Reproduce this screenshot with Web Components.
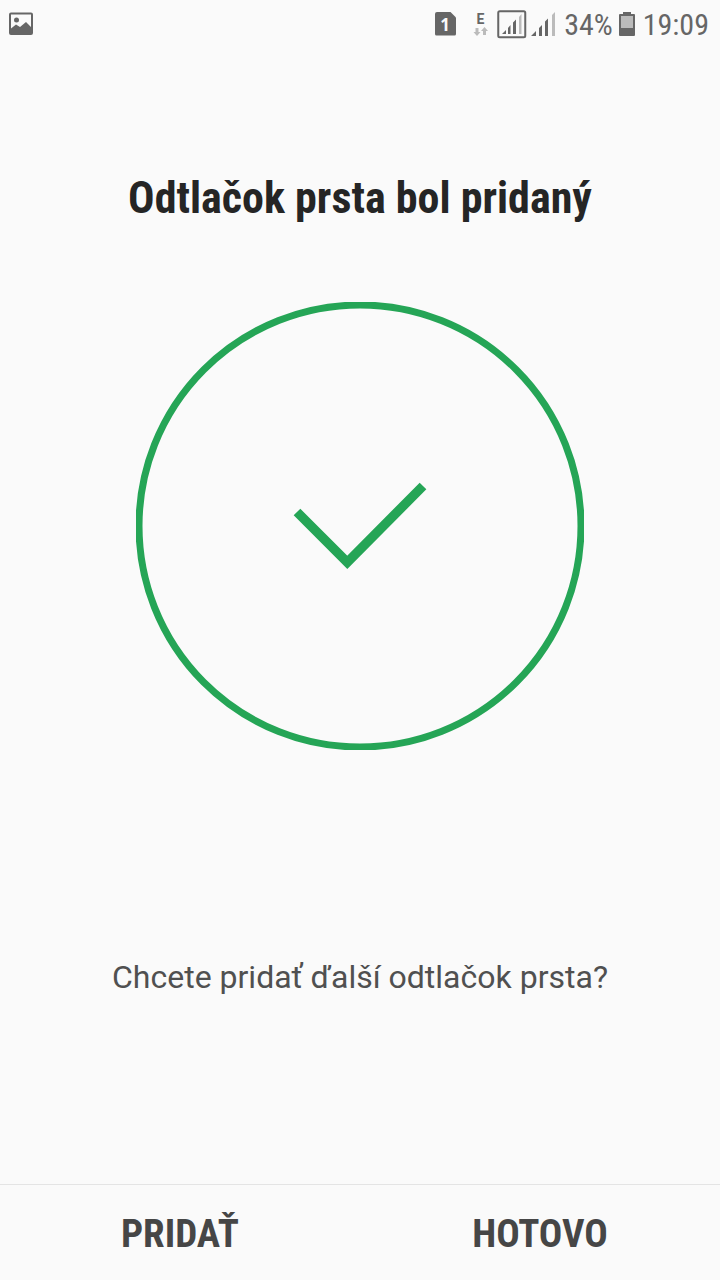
<!DOCTYPE html>
<html lang="sk">
<head>
<meta charset="utf-8">
<meta name="viewport" content="width=device-width, initial-scale=1">
<title>Odtlačok prsta</title>
<style>
  html, body { margin: 0; background: #fafafa; }
  body { font-family: Roboto, sans-serif; }
</style>
</head>
<body>
<fingerprint-screen>
  <status-bar slot="status" battery="34%" time="19:09"></status-bar>
  <span slot="title">Odtlačok prsta bol pridaný</span>
  <success-mark></success-mark>
  <span slot="question">Chcete pridať ďalší odtlačok prsta?</span>
  <action-button slot="actions">PRIDAŤ</action-button>
  <action-button slot="actions">HOTOVO</action-button>
</fingerprint-screen>

<script>
class BaseElement extends HTMLElement {
  constructor() {
    super();
    this.attachShadow({ mode: 'open' }).innerHTML = this.constructor.markup;
  }
}

customElements.define('status-bar', class extends BaseElement {
  static markup = `
    <style>
      :host { display: flex; align-items: center; justify-content: space-between;
              height: 48px; padding: 0 11px 0 8px; color: #666;
              font-family: "Roboto Condensed", Roboto, sans-serif; font-size: 30px; line-height: 48px; }
      svg { display: block; flex: none; }
      .right { display: flex; align-items: center; }
      .right span { padding-top: 2px; }
      .icons { display: flex; align-items: center; margin-right: 8px; }
      .battery { margin: 0 8px 0 6px; }
    </style>
    <svg width="26" height="48" viewBox="0 0 26 48" aria-hidden="true">
      <path fill="#666" fill-rule="evenodd" d="M3 12.500h20q2 0 2 2v18.500q0 2-2 2H3q-2 0-2-2V14.500q0-2 2-2zM3 14.500v14l5-4 4 2.500 6-5 5 5V14.500z"/>
      <circle cx="8.500" cy="20" r="2.500" fill="#666"/>
    </svg>
    <div class="right">
      <div class="icons">
        <svg width="122" height="48" viewBox="433 0 122 48" aria-hidden="true">
          <path fill="#666" d="M436 12h13.500l5.500 5.500V34q0 1.500-1.500 1.500H435.500q-1.500 0-1.500-1.500V14q0-2 2-2z"/>
          <text x="444" y="30.500" text-anchor="middle" font-family="Open Sans, sans-serif" font-weight="700" font-size="17" fill="#fafafa">1</text>
          <text x="479.500" y="23.500" text-anchor="middle" font-family="Roboto, sans-serif" font-weight="700" font-size="14" fill="#666">E</text>
          <path fill="#bbb" d="M474.500 28h3v4h2l-3.500 4-3.500-4h2zM483.500 27l3.500 4h-2v4h-3v-4h-2z"/>
          <rect x="497.250" y="11.250" width="27" height="26" rx="1.500" fill="none" stroke="#666" stroke-width="2"/>
          <path fill="#666" d="M501 34l4-4v4zM507 28l2.500-3v9H507zM512 22.500l3-3V34h-3z"/>
          <path fill="#bbb" d="M518 17l2.500-3v20H518z"/>
          <path fill="#666" d="M530 36l5-5v5zM538 28l3-3v11h-3zM544 21.500l3-3V36h-3z"/>
          <path fill="#bbb" d="M551 15l3-3v24h-3z"/>
        </svg>
      </div>
      <span id="level"></span>
      <svg class="battery" width="16" height="48" viewBox="0 0 16 48" aria-hidden="true">
        <path fill="#666" d="M4 12h8v2h3q1 0 1 1v20q0 1-1 1H1q-1 0-1-1V15q0-1 1-1h3z"/>
        <path fill="#bbb" d="M2 16h12v12H2z"/>
      </svg>
      <span id="clock"></span>
    </div>`;
  connectedCallback() {
    this.shadowRoot.getElementById('level').textContent = this.getAttribute('battery');
    this.shadowRoot.getElementById('clock').textContent = this.getAttribute('time');
  }
});

customElements.define('success-mark', class extends BaseElement {
  static markup = `
    <style>
      :host { display: block; width: 448px; max-width: 80%; }
      svg { display: block; width: 100%; height: auto; }
    </style>
    <svg viewBox="0 0 448 448" fill="none" stroke="#25a556" aria-hidden="true">
      <circle cx="224" cy="224" r="221" stroke-width="7"/>
      <path d="M161 210l50.300 50.300L287 184" stroke-width="9.400"/>
    </svg>`;
});

customElements.define('action-button', class extends BaseElement {
  static markup = `
    <style>
      :host { display: block; flex: 1 1 0; }
      button { display: block; width: 100%; margin: 0; padding: 25px 0 22px; border: 0; background: none;
               color: #464646; font: 700 39px/48px "Roboto Condensed", Roboto, sans-serif; cursor: pointer; }
    </style>
    <button type="button"><slot></slot></button>`;
});

customElements.define('fingerprint-screen', class extends BaseElement {
  static markup = `
    <style>
      :host { display: flex; flex-direction: column; min-height: 100vh; background: #fafafa; }
      main { flex: 1; display: flex; flex-direction: column; align-items: center; text-align: center; }
      h1 { margin: 124px 0 78px; color: #252525; font: 700 44px/52px "Roboto Condensed", Roboto, sans-serif; }
      p { margin: 207px 0 0; color: #505050; font-size: 32px; line-height: 40px; }
      footer { display: flex; border-top: 1px solid #e4e4e4; }
    </style>
    <slot name="status"></slot>
    <main>
      <h1><slot name="title"></slot></h1>
      <slot></slot>
      <p><slot name="question"></slot></p>
    </main>
    <footer><slot name="actions"></slot></footer>`;
});
</script>
</body>
</html>
